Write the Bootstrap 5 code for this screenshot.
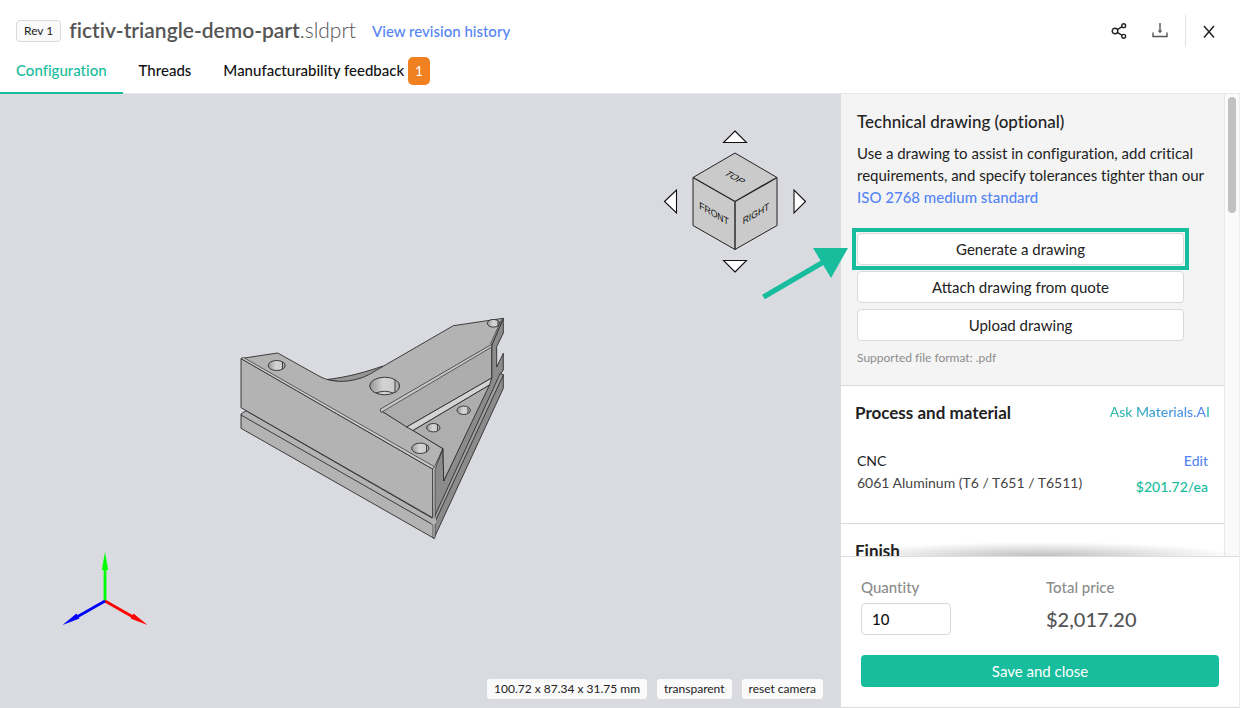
<!DOCTYPE html>
<html lang="en">
<head>
<meta charset="utf-8">
<meta name="viewport" content="width=device-width, initial-scale=1">
<title>fictiv-triangle-demo-part.sldprt</title>
<link href="https://cdn.jsdelivr.net/npm/bootstrap@5.3.0/dist/css/bootstrap.min.css" rel="stylesheet">
<style>
  body { font-family: Lato, "Open Sans", sans-serif; font-size: 15px; line-height: 22px; color: #222; background: #fff; font-variant-ligatures: none; }
  a { text-decoration: none; }
  .link-blue { color: #5585f5; font-weight: 500; }
  .app-head { height: 94px; border-bottom: 1px solid #e8e8ea; }
  .title-row { height: 47px; padding: 15px 16px 0; }
  .rev-tag { height: 22px; padding: 0 7px; font-size: 12px; line-height: 20px; border: 1px solid #d9d9d9; border-radius: 4px; background: #fafafa; }
  .file-name { font-size: 21px; line-height: 32px; font-weight: 300; color: #555; margin: 0 0 2px; }
  .file-name strong { font-weight: 600; }
  .icon-btn { padding: 0; border: 0; background: none; line-height: 0; }
  .head-rule { width: 1px; height: 32px; background: #e2e2e2; }
  .tab-row .nav-link { padding: 12px 16px 0; height: 47px; color: #111; font-weight: 500; border-bottom: 2px solid transparent; }
  .tab-row .nav-link.active { color: #17bd9c; border-color: #17bd9c; }
  .count-tag { display: inline-block; width: 22px; height: 28px; line-height: 28px; margin: -3px 0; text-align: center; font-size: 13px; border-radius: 5px; color: #fff; background: #f08020; }
  .viewer { background: #dadbe0; min-width: 0; }
  .pointer-arrow { top: 152px; right: -8px; z-index: 2; }
  .view-tools { right: 17px; bottom: 9px; gap: 10px; }
  .tool-chip { height: 20px; padding: 0 7px; border: 0; border-radius: 3px; background: #fafafa; color: #222; font-size: 12px; line-height: 20px; }
  .side-panel { width: 400px; border-right: 1px solid #ececec; box-shadow: -2px 0 4px rgba(0,0,0,.1); }
  .panel-body { min-height: 0; border-left: 1px solid #ddd; }
  .panel-content { min-width: 0; }
  .scroll-track { width: 15px; padding: 3px; border-left: 1px solid #e8e8e8; background: #fafafa; }
  .scroll-thumb { width: 8px; height: 116px; border-radius: 4px; background: #c1c1c1; }
  .drawing-block { padding: 16px 40px 16px 16px; background: #f4f4f4; border-bottom: 1px solid #d9d9d9; }
  .intro { margin: 8px 0 25px; white-space: nowrap; }
  .block-title { font-size: 17px; line-height: 24px; font-weight: 500; margin: 0; }
  .block-title.heavy { font-weight: 700; }
  .draw-actions { gap: 6px; margin-bottom: 6px; }
  .line-btn { height: 32px; padding: 0; border: 1px solid #d9d9d9; border-radius: 4px; background: #fff; color: #222; line-height: 28px; }
  .highlighted { outline: 4px solid #17bd9c; outline-offset: 1px; }
  .hint { font-size: 12px; color: #8c8c8c; }
  .material-block { height: 138px; padding: 15px 14px; border-bottom: 1px solid #d9d9d9; }
  .material-row { margin-top: 25px; padding: 0 2px; font-size: 14px; }
  .mat-name { color: #444; }
  .ai-link { font-size: 14px; font-weight: 500; color: transparent; background: linear-gradient(90deg, #2bbda5, #3a9bd0 50%, #5585f5 94%, #2bbda5 98%); -webkit-background-clip: text; background-clip: text; }
  .green { color: #17bd9c; font-weight: 500; }
  .finish-block { padding: 15px 14px; }
  .fade-shadow { left: 0; right: 0; bottom: 0; height: 14px; background: radial-gradient(ellipse 50% 100% at 50% 100%, rgba(0,0,0,.25), transparent); }
  .order-bar { border: 1px solid #ddd; border-right: 0; padding: 19px 20px 20px; }
  .order-bar label, .grey { color: #8c8c8c; font-weight: 500; margin-bottom: 5px; }
  .order-values { margin-bottom: 20px; }
  .price-col { padding-left: 6px; }
  .qty { display: block; width: 90px; height: 32px; padding: 0 10px; border: 1px solid #d9d9d9; border-radius: 4px; font-size: 15px; font-weight: 500; color: #111; }
  .total { font-size: 20px; line-height: 32px; font-weight: 500; color: #555; }
  .save-btn { display: block; height: 32px; padding: 0; border: 0; border-radius: 4px; background: #17bd9c; color: #fff; line-height: 30px; }
</style>
</head>
<body>
<div class="vh-100 d-flex flex-column overflow-hidden">
  <header class="app-head flex-shrink-0">
    <div class="title-row d-flex align-items-center">
      <span class="rev-tag me-2">Rev 1</span>
      <h1 class="file-name"><strong>fictiv-triangle-demo-part</strong>.sldprt</h1>
      <a href="#" class="link-blue ms-3">View revision history</a>
      <div class="ms-auto d-flex align-items-center">
        <button class="icon-btn" aria-label="Share">
          <svg width="16" height="16" viewBox="0 0 16 16" fill="none" stroke="#222" stroke-width="1.4"><circle cx="4" cy="8" r="2.8"/><circle cx="12.7" cy="2.7" r="1.9"/><circle cx="12.7" cy="13.3" r="1.9"/><path d="M6.4 6.6 11.1 3.7M6.4 9.4l4.7 2.9"/></svg>
        </button>
        <button class="icon-btn ms-4" aria-label="Download">
          <svg width="18" height="18" viewBox="0 0 18 18" fill="none" stroke="#555" stroke-width="1.4"><path d="M9 1v9M2 10.500v4h14v-4"/><path d="M6.700 8.500h4.600L9 11.200z" fill="#555" stroke="none"/></svg>
        </button>
        <div class="head-rule mx-3"></div>
        <button class="icon-btn me-2" aria-label="Close">
          <svg width="14" height="14" viewBox="0 0 14 14" fill="none" stroke="#222" stroke-width="1.500"><path d="M2 2 12 13.500M12 2 2 13.500"/></svg>
        </button>
      </div>
    </div>
    <nav class="nav tab-row flex-nowrap">
      <a class="nav-link active" href="#">Configuration</a>
      <a class="nav-link" href="#">Threads</a>
      <a class="nav-link" href="#">Manufacturability feedback <span class="count-tag">1</span></a>
    </nav>
  </header>

  <main class="d-flex flex-grow-1 overflow-hidden">
    <section class="viewer flex-grow-1 position-relative z-1">
      <svg class="position-absolute w-100 h-100" viewBox="0 94 840 614" role="img" aria-label="3D view of the part">
        <g stroke="#2c2c2c" stroke-width=".9" stroke-linejoin="round" fill="#b3b3b3">
          <!-- lower slab and right-hand sides -->
          <path d="M327 379.500C348 377 366 372 383 366L376 376 345 383z" fill="#969696"/>
          <path d="M241 414 246 410.700 432 518 434 524V538.300L241 428.300z"/>
          <path d="M434 469 443 448.700 443.700 481 491.700 378V345L503.300 318.500V333L496.700 346.700 496.700 367 503.300 353.300V370L500.300 374 503.300 374.500V388.300L434 538.300z" fill="#8b8b8b"/>
          <path d="M434 517.700 500.300 373.300 503.300 375 434 524z" fill="#a0a0a0"/>
          <!-- front face -->
          <path d="M241 358.500 432.700 469V517.700L241 407.700z"/>
          <path d="M241 415 431.700 524H434" fill="none"/>
          <!-- top face -->
          <path d="M241 358.500 277.700 353 318 375.500C334 385 358 382.500 375 371L453.300 325.700 503.300 318.300 491.700 345 380 410 443 448.700 434 469H432.700z"/>
          <!-- pocket -->
          <path d="M380 410 491.700 345V378L406.700 427z" fill="#adadad"/>
          <path d="M406.700 427 491.700 378 489.500 385 413 430.500z" fill="#d4d4d4"/>
          <path d="M413 430.500 489.500 385 443.700 481 443 448.700z" fill="#aeaeae"/>
          <!-- chamfers -->
          <path d="M241 358.500 432.700 469 434.500 466.800 243.500 357.500z" fill="#ccc" stroke-width=".7"/>
          <path d="M432.700 469 434.500 466.800 443 448.700 435 469.500V538.300L433 537.500z" fill="#ccc" stroke-width=".7"/>
          <path d="M380 409.300 491.700 344.300V347L381 412.500z" fill="#c6c6c6" stroke-width=".7"/>
          <path d="M490.500 344 501.500 319.500" fill="none" stroke-width=".7"/>
          <path d="M431.700 517.700 434.500 519 436 517 436 523 434 525 431.700 524z" fill="#b3b3b3" stroke="none"/>
        </g>
        <defs>
          <linearGradient id="bore"><stop offset="0" stop-color="#959595"/><stop offset=".45" stop-color="#d4d4d4"/><stop offset=".8" stop-color="#ccc"/><stop offset="1" stop-color="#999"/></linearGradient>
        </defs>
        <g fill="url(#bore)" stroke="#2c2c2c" stroke-width=".9">
          <ellipse cx="276.700" cy="365.500" rx="8.500" ry="5"/>
          <ellipse cx="384.700" cy="386" rx="15" ry="8.800"/>
          <path d="M395 380V392.500M376 393Q384.500 389.500 393 393" fill="none"/>
          <ellipse cx="463.700" cy="410.300" rx="6.700" ry="4.200"/>
          <ellipse cx="433.300" cy="427.700" rx="6.700" ry="4.200"/>
          <ellipse cx="420.300" cy="448.300" rx="8.700" ry="5.200"/>
          <ellipse cx="493.500" cy="323.300" rx="6.200" ry="3.800"/>
          <path d="M282.500 362V369M426.500 445V452M468 407.500V413M437.500 425V430.500M498 321V326" fill="none"/>
        </g>
        <!-- view cube -->
        <g fill="#cacaca" stroke="#222" stroke-width="1" stroke-linejoin="round">
          <path d="M735 153 777 177.500V225.500L735 249.500 693 225.500V177.500z"/>
          <path d="M693 177.500 735 201.500 777 177.500M735 201.500V249.500" fill="none" stroke-width="1.400"/>
        </g>
        <g font-family="Liberation Sans, sans-serif" font-size="10" fill="#111" text-anchor="middle">
          <text transform="matrix(.86 .5 -.86 .5 732 179)">TOP</text>
          <text transform="matrix(.86 .5 0 1 714 217)">FRONT</text>
          <text transform="matrix(.86 -.5 0 1 756 217)">RIGHT</text>
        </g>
        <g fill="#fff" stroke="#111" stroke-width="1.100">
          <path d="M735 131 746.500 142.500H723.500zM735 272 746.500 260.500H723.500zM664.500 201.500 676.500 190V213zM805.500 201.500 794 190V213z"/>
        </g>
        <!-- axes -->
        <g stroke-width="2.800">
          <path d="M105 601V565" stroke="#0f0"/><path d="M105 552 108.200 570H101.800z" fill="#0f0"/>
          <path d="M105 601 134 617.500" stroke="red"/><path d="M147.500 625 130.500 618.500 133.500 613.500z" fill="red"/>
          <path d="M105 601 76 617.500" stroke="#00f"/><path d="M62.500 625 79.500 618.500 76.500 613.500z" fill="#00f"/>
        </g>
      </svg>
      <svg class="pointer-arrow position-absolute" width="88" height="56" viewBox="0 0 88 56" aria-hidden="true">
        <path d="M3.500 51 66 14.500" stroke="#17bd9c" stroke-width="5.500"/><path d="M88 2H53L71 32z" fill="#17bd9c"/>
      </svg>
      <div class="view-tools position-absolute d-flex">
        <span class="tool-chip">100.72 x 87.34 x 31.75 mm</span>
        <button class="tool-chip">transparent</button>
        <button class="tool-chip">reset camera</button>
      </div>
    </section>

    <aside class="side-panel flex-shrink-0 d-flex flex-column bg-white position-relative">
      <div class="panel-body d-flex flex-grow-1 overflow-hidden position-relative">
        <div class="panel-content flex-grow-1">
          <section class="drawing-block">
            <h2 class="block-title">Technical drawing (optional)</h2>
            <p class="intro">Use a drawing to assist in configuration, add critical<br>requirements, and specify tolerances tighter than our<br><a href="#" class="link-blue">ISO 2768 medium standard</a></p>
            <div class="d-grid draw-actions">
              <div class="highlighted d-grid"><button class="line-btn">Generate a drawing</button></div>
              <button class="line-btn">Attach drawing from quote</button>
              <button class="line-btn">Upload drawing</button>
            </div>
            <div class="hint">Supported file format: .pdf</div>
          </section>
          <section class="material-block">
            <div class="d-flex justify-content-between">
              <h2 class="block-title heavy">Process and material</h2>
              <a href="#" class="ai-link">Ask Materials.AI</a>
            </div>
            <div class="material-row d-flex justify-content-between">
              <div><div>CNC</div><div class="mat-name">6061 Aluminum (T6 / T651 / T6511)</div></div>
              <div class="text-end"><a href="#" class="link-blue d-block mb-1">Edit</a><div class="green">$201.72/ea</div></div>
            </div>
          </section>
          <section class="finish-block"><h2 class="block-title heavy">Finish</h2></section>
        </div>
        <div class="scroll-track flex-shrink-0"><div class="scroll-thumb"></div></div>
        <div class="fade-shadow position-absolute"></div>
      </div>
      <form class="order-bar flex-shrink-0">
        <div class="row g-0 order-values">
          <div class="col-6"><label for="qty" class="d-block">Quantity</label><input id="qty" class="qty" value="10"></div>
          <div class="col-6 price-col"><div class="grey">Total price</div><div class="total">$2,017.20</div></div>
        </div>
        <button type="button" class="save-btn w-100">Save and close</button>
      </form>
    </aside>
  </main>
</div>
<script src="https://cdn.jsdelivr.net/npm/bootstrap@5.3.0/dist/js/bootstrap.bundle.min.js"></script>
</body>
</html>
